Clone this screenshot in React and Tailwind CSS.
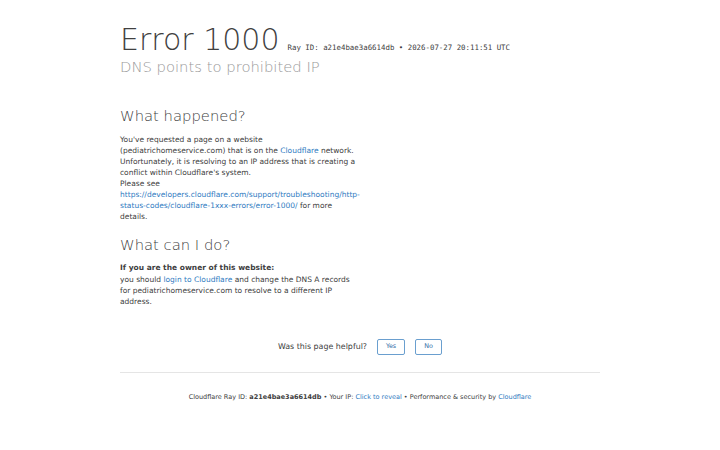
import React from 'react';

const font = { fontFamily: '"DejaVu Sans", sans-serif' };

const Link = ({ children }) => (
  <a href="#" className="text-[#2f7bbf] no-underline">{children}</a>
);

const App = () => {
  return (
    <div className="min-h-[450px] bg-white text-[#404040]" style={font}>
      <div className="w-[480px] mx-auto pt-[22px]">
        <header>
          <div className="flex items-baseline">
            <h1 className="text-[30px] font-extralight leading-[36px] text-[#404040]">Error 1000</h1>
            <span className="ml-[8px] text-[7.4px] text-[#404040] font-['DejaVu_Sans_Mono',monospace]">
              Ray ID: a21e4bae3a6614db • 2026-07-27 20:11:51 UTC
            </span>
          </div>
          <h2 className="text-[14.8px] font-extralight leading-[18px] text-[#999999]">DNS points to prohibited IP</h2>
        </header>

        <section className="mt-[31px] w-[240px]">
          <h2 className="text-[14.8px] font-light leading-[18px] text-[#404040]">What happened?</h2>
          <p className="mt-[8.5px] text-[7.5px] leading-[11.1px]">
            You've requested a page on a website (pediatrichomeservice.com) that is on the <Link>Cloudflare</Link> network. Unfortunately, it is resolving to an IP address that is creating a conflict within Cloudflare's system.
            <br />
            Please see <Link>https://developers.cloudflare.com/support/troubleshooting/http-status-codes/cloudflare-1xxx-errors/error-1000/</Link> for more details.
          </p>

          <h2 className="mt-[13.5px] text-[14.8px] font-light leading-[18px] text-[#404040]">What can I do?</h2>
          <p className="mt-[8.7px] text-[7.5px] leading-[11.1px]">
            <strong className="font-bold">If you are the owner of this website:</strong>
            <br />
            you should <Link>login to Cloudflare</Link> and change the DNS A records for pediatrichomeservice.com to resolve to a different IP address.
          </p>
        </section>

        <div className="mt-[32px] flex items-center justify-center gap-[10px] text-[7.9px]">
          <span>Was this page helpful?</span>
          <button className="w-[28px] h-[16px] border border-[#6a9fcf] rounded-[2px] text-[6.4px] text-[#2f6ba5] bg-white">Yes</button>
          <button className="w-[27px] h-[16px] border border-[#6a9fcf] rounded-[2px] text-[6.4px] text-[#2f6ba5] bg-white">No</button>
        </div>

        <div className="mt-[17px] border-t border-[#e5e5e5]" />

        <p className="mt-[19px] text-center text-[6.5px] leading-[10px] text-[#404040]">
          Cloudflare Ray ID: <strong className="font-bold">a21e4bae3a6614db</strong> • Your IP: <Link>Click to reveal</Link> • Performance &amp; security by <Link>Cloudflare</Link>
        </p>
      </div>
    </div>
  );
};

export default App;
